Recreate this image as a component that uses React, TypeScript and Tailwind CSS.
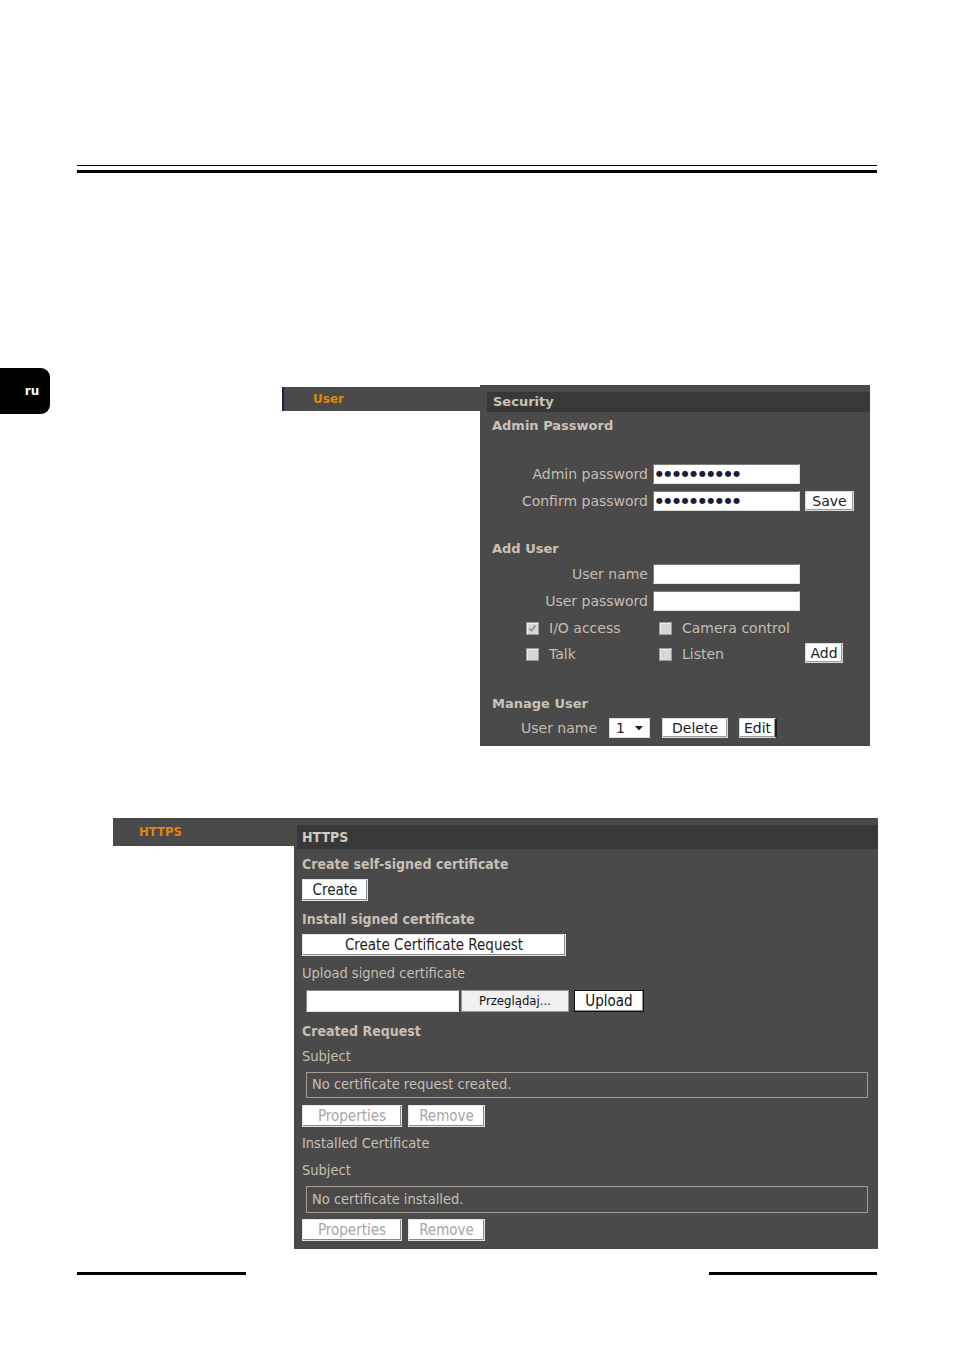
import React from 'react'

const verdana = { fontFamily: '"DejaVu Sans", Verdana, sans-serif' }
const tahoma = { fontFamily: '"DejaVu Sans Condensed", "DejaVu Sans", Tahoma, sans-serif' }

const Field = ({ value }: { value?: string }) => (
  <div className="flex h-[20px] w-[147px] items-center border border-[#7a7a7a] border-b-[#e0e0e0] border-r-[#e0e0e0] bg-white pl-[2px]">
    {value && (
      <span className="text-[8px] leading-none tracking-[1.6px] text-[#1b1b3a]">{value}</span>
    )}
  </div>
)

const Btn = ({ label, className = '' }: { label: string; className?: string }) => (
  <div
    className={`flex h-[20px] items-center justify-center border border-[#d8d8d8] bg-white text-[14px] leading-none text-[#202020] shadow-[inset_-1px_-1px_0_#9a9a9a] ${className}`}
  >
    {label}
  </div>
)

const Check = ({ checked }: { checked?: boolean }) => (
  <div className="flex h-[13px] w-[13px] items-center justify-center border border-[#9c9c9c] bg-[#d6d6d6] shadow-[inset_1px_1px_0_#eeeeee]">
    {checked && (
      <svg width="9" height="9" viewBox="0 0 9 9">
        <path d="M1.5 4.5 L3.5 6.8 L7.5 1.5" stroke="#8e8e8e" strokeWidth="1.6" fill="none" />
      </svg>
    )}
  </div>
)

const HBtn = ({ label, w, disabled }: { label: string; w: string; disabled?: boolean }) => (
  <div
    className={`flex h-[22px] items-center justify-center border border-[#e4e4e4] bg-white text-[15px] leading-none shadow-[inset_-1px_-1px_0_#8a8a8a] ${w} ${
      disabled ? 'text-[#a6a6a6]' : 'text-[#1e1e1e]'
    }`}
  >
    {label}
  </div>
)

function SecurityPanel() {
  const label = 'w-[173px] pr-[5px] text-right text-[14px] leading-none text-[#c6bdb2]'
  return (
    <div className="flex h-[361px] w-[390px] flex-col bg-[#4a4a4a]" style={verdana}>
      <div className="ml-[7px] mt-[7px] flex h-[20px] items-center bg-[#383838] pl-[6px] text-[13px] font-bold text-[#cbc2b7]">
        Security
      </div>
      <div className="mt-[6px] flex h-[16px] items-center pl-[12px] text-[13px] font-bold text-[#cbc2b7]">
        Admin Password
      </div>
      <div className="mt-[30px] flex h-[20px] items-center">
        <div className={label}>Admin password</div>
        <Field value="●●●●●●●●●●" />
      </div>
      <div className="mt-[7px] flex h-[20px] items-center">
        <div className={label}>Confirm password</div>
        <Field value="●●●●●●●●●●" />
        <Btn label="Save" className="ml-[5px] w-[49px]" />
      </div>
      <div className="mt-[30px] flex h-[16px] items-center pl-[12px] text-[13px] font-bold text-[#cbc2b7]">
        Add User
      </div>
      <div className="mt-[7px] flex h-[20px] items-center">
        <div className={label}>User name</div>
        <Field />
      </div>
      <div className="mt-[7px] flex h-[20px] items-center">
        <div className={label}>User password</div>
        <Field />
      </div>
      <div className="mt-[8px] flex h-[18px] items-center pl-[46px] text-[14px] text-[#c6bdb2]">
        <div className="flex w-[133px] items-center gap-[10px]">
          <Check checked />
          <span>I/O access</span>
        </div>
        <div className="flex items-center gap-[10px]">
          <Check />
          <span>Camera control</span>
        </div>
      </div>
      <div className="mt-[6px] flex h-[20px] items-center pl-[46px] text-[14px] text-[#c6bdb2]">
        <div className="flex w-[133px] items-center gap-[10px] pt-[3px]">
          <Check />
          <span>Talk</span>
        </div>
        <div className="flex w-[146px] items-center gap-[10px] pt-[3px]">
          <Check />
          <span>Listen</span>
        </div>
        <Btn label="Add" className="w-[38px]" />
      </div>
      <div className="mt-[33px] flex h-[16px] items-center pl-[12px] text-[13px] font-bold text-[#cbc2b7]">
        Manage User
      </div>
      <div className="mt-[6px] flex h-[20px] items-center pl-[41px] text-[14px] text-[#c6bdb2]">
        <span className="w-[88px]">User name</span>
        <div className="flex h-[20px] w-[41px] items-center justify-between border border-[#d8d8d8] bg-white pl-[6px] pr-[6px] text-[14px] text-[#202020]">
          <span>1</span>
          <svg width="8" height="5" viewBox="0 0 8 5">
            <path d="M0 0 H8 L4 4.5 Z" fill="#202020" />
          </svg>
        </div>
        <Btn label="Delete" className="ml-[12px] w-[66px]" />
        <Btn label="Edit" className="ml-[11px] w-[38px] border-r-2 border-r-[#202020]" />
      </div>
    </div>
  )
}

function HttpsPanel() {
  const head = 'flex h-[18px] items-center text-[14px] font-bold text-[#c8bfb4]'
  const plain = 'flex h-[18px] items-center text-[14.5px] text-[#c8bfb4]'
  return (
    <div className="flex h-[431px] w-[584px] flex-col bg-[#4a4a4a] pl-[8px]" style={tahoma}>
      <div className="-ml-[5px] mt-[7px] flex h-[24px] items-center bg-[#383838] pl-[5px] text-[14px] font-bold text-[#d2cac0]">
        HTTPS
      </div>
      <div className={`mt-[6px] ${head}`}>Create self-signed certificate</div>
      <div className="mt-[6px]">
        <HBtn label="Create" w="w-[66px]" />
      </div>
      <div className={`mt-[9px] ${head}`}>Install signed certificate</div>
      <div className="mt-[6px]">
        <HBtn label="Create Certificate Request" w="w-[264px]" />
      </div>
      <div className={`mt-[9px] ${plain}`}>Upload signed certificate</div>
      <div className="ml-[4px] mt-[7px] flex h-[22px] items-center">
        <div className="h-[22px] w-[153px] border border-[#8a8a8a] border-b-[#e8e8e8] border-r-[#e8e8e8] bg-white" />
        <div className="ml-[2px] flex h-[22px] w-[108px] items-center justify-center border border-[#9a9a9a] bg-[#f0f0f0] text-[13px] text-[#101010]">
          Przeglądaj...
        </div>
        <div className="ml-[5px] flex h-[22px] w-[70px] items-center justify-center border border-[#101010] bg-white text-[15px] text-[#101010] shadow-[inset_-1px_-1px_0_#8a8a8a]">
          Upload
        </div>
      </div>
      <div className={`mt-[10px] ${head}`}>Created Request</div>
      <div className={`mt-[8px] ${plain}`}>Subject</div>
      <div className="ml-[4px] mt-[6px] flex h-[26px] w-[562px] items-center border border-[#a39a90] pl-[5px] text-[14.5px] text-[#c8bfb4]">
        No certificate request created.
      </div>
      <div className="mt-[7px] flex gap-[6px]">
        <HBtn label="Properties" w="w-[100px]" disabled />
        <HBtn label="Remove" w="w-[77px]" disabled />
      </div>
      <div className={`mt-[8px] ${plain}`}>Installed Certificate</div>
      <div className={`mt-[9px] ${plain}`}>Subject</div>
      <div className="ml-[4px] mt-[6px] flex h-[27px] w-[562px] items-center border border-[#a39a90] pl-[5px] text-[14.5px] text-[#c8bfb4]">
        No certificate installed.
      </div>
      <div className="mt-[6px] flex gap-[6px]">
        <HBtn label="Properties" w="w-[100px]" disabled />
        <HBtn label="Remove" w="w-[77px]" disabled />
      </div>
    </div>
  )
}

export default function App() {
  return (
    <div className="relative h-[1350px] w-[954px] bg-white">
      <div className="pt-[165px]">
        <div className="ml-[77px] h-px w-[800px] bg-black" />
        <div className="ml-[77px] mt-[4px] h-[3px] w-[800px] bg-black" />
      </div>

      <div
        className="absolute left-0 top-[368px] flex h-[46px] w-[50px] items-center justify-center rounded-r-[9px] bg-black pl-[14px] text-[12px] font-bold text-white"
        style={verdana}
      >
        ru
      </div>

      <div className="ml-[282px] mt-[212px] flex items-start">
        <div
          className="mt-[2px] flex h-[24px] w-[198px] items-center border-l-2 border-[#1c1f4a] bg-[#4a4a4a] pl-[29px] text-[12px] font-bold text-[#e0880a]"
          style={verdana}
        >
          User
        </div>
        <SecurityPanel />
      </div>

      <div className="ml-[113px] mt-[72px] flex items-start">
        <div
          className="flex h-[28px] w-[181px] items-center bg-[#4a4a4a] pl-[26px] text-[13px] font-bold text-[#e0880a]"
          style={tahoma}
        >
          HTTPS
        </div>
        <HttpsPanel />
      </div>

      <div className="mt-[23px] flex justify-between px-[77px]">
        <div className="h-[3px] w-[169px] bg-black" />
        <div className="h-[3px] w-[168px] bg-black" />
      </div>
    </div>
  )
}
